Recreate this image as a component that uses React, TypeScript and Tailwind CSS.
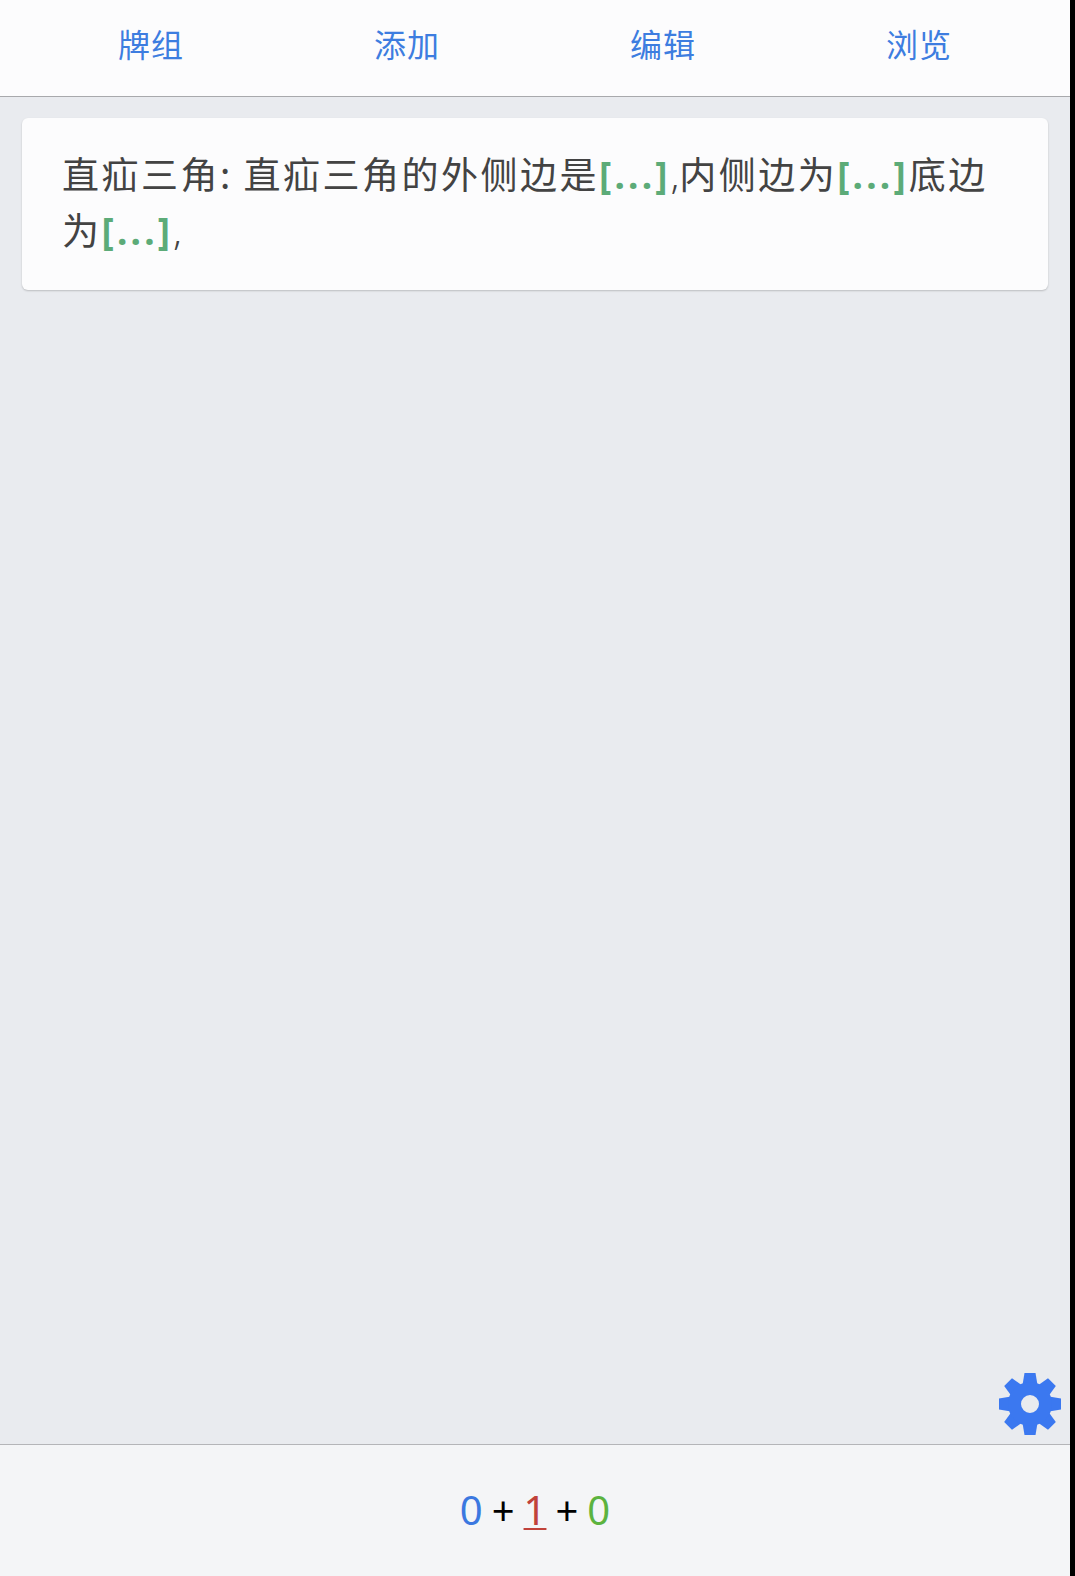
const tabs = ["牌组", "添加", "编辑", "浏览"];
const cjk = "font-['Noto_Sans_CJK_SC','Noto_Sans',sans-serif]";

const Cloze = () => (
  <span className="font-bold leading-none tracking-[3.2px] text-[#5cab78] font-['Noto_Sans',sans-serif]">[...]</span>
);

const Comma = () => <span className="font-light leading-none tracking-[0px] font-['Noto_Sans',sans-serif]">,</span>;

const Gear = () => (
  <svg viewBox="0 0 62 62" className="h-[62px] w-[62px]" fill="#3b78f0">
    {[0, 45, 90, 135, 180, 225, 270, 315].map((deg) => (
      <path key={deg} d="M25.5 0 H36.5 L38.5 12 H23.5 Z" transform={`rotate(${deg} 31 31)`} />
    ))}
    <path
      fillRule="evenodd"
      d="M31 9 a22 22 0 1 0 0 44 a22 22 0 1 0 0 -44 Z M31 22 a9 9 0 1 1 0 18 a9 9 0 1 1 0 -18 Z"
    />
  </svg>
);

export default function App() {
  return (
    <div className={`flex h-[1576px] w-[1075px] bg-black ${cjk}`}>
      <div className="relative flex w-[1070px] flex-col bg-[#e9ebef]">
        <div className="grid h-[97px] grid-cols-4 border-b border-[#a8a9ac] bg-[#fcfcfd] px-[23px]">
          {tabs.map((tab) => (
            <div key={tab} className="flex items-center justify-center pb-[10px] text-[32px] tracking-[1px] text-[#3d7de0]">
              {tab}
            </div>
          ))}
        </div>
        <div className="flex-1 px-[22px] pt-[21px]">
          <div className="h-[172px] rounded-md bg-[#fcfcfd] px-[40px] pt-[27px] text-[37px] leading-[56px] tracking-[2.5px] text-[#434343] shadow-[0_1px_2px_rgba(0,0,0,0.2)]">
            直疝三角: 直疝三角的外侧边是<Cloze /><Comma />内侧边为<Cloze />底边为<Cloze /><Comma />
          </div>
        </div>
        <div className="absolute right-[9px] top-[1373px]">
          <Gear />
        </div>
        <div className="flex h-[132px] items-center justify-center gap-[9px] border-t border-[#b4b5b8] bg-[#f4f5f7] pb-[2px] text-[40px] font-['Noto_Sans',sans-serif]">
          <span className="text-[#3b78e0]">0</span>
          <span className="text-black">+</span>
          <span className="text-[#c0423a] underline underline-offset-[3px] decoration-2">1</span>
          <span className="text-black">+</span>
          <span className="text-[#5cb33f]">0</span>
        </div>
      </div>
    </div>
  );
}
